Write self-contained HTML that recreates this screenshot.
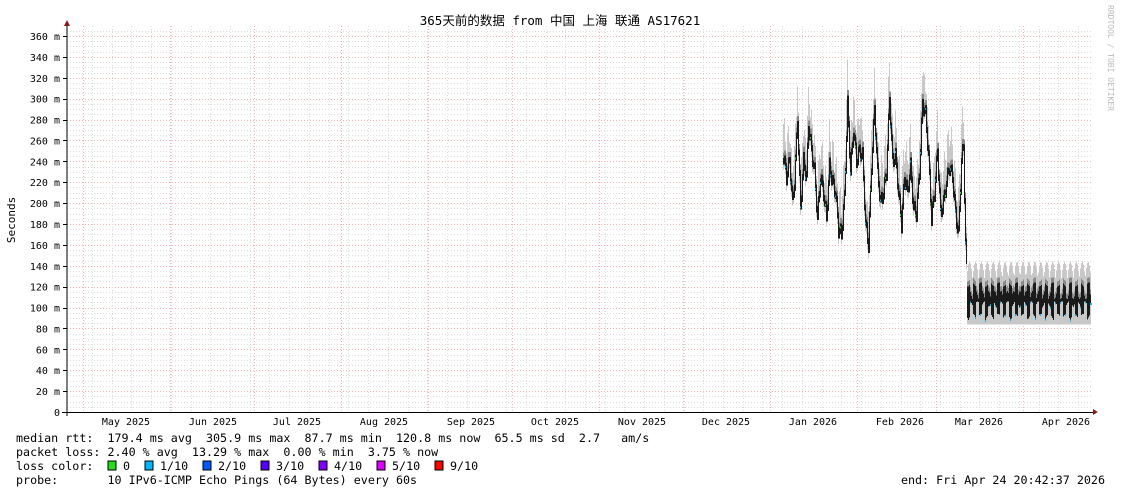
<!DOCTYPE html>
<html><head><meta charset="utf-8">
<style>
html,body{margin:0;padding:0;background:#fff;}
svg{display:block;}
text{font-family:"DejaVu Sans Mono","Liberation Mono","Noto Sans CJK SC",monospace;fill:#000;}
</style></head>
<body>
<svg id="g" width="1121" height="494" viewBox="0 0 1121 494" xmlns="http://www.w3.org/2000/svg" shape-rendering="crispEdges">
<g id="grid"></g>
<g id="data"></g>
<line x1="67" y1="24" x2="67" y2="416" stroke="#000" stroke-width="1"/>
<polygon points="64,26 70,26 67,20" fill="#8b1a1a"/>
<line x1="62" y1="412.5" x2="1095" y2="412.5" stroke="#000"/>
<polygon points="1093,409 1093,415 1098,412" fill="#8b1a1a"/>
<g id="labels" font-size="10"></g>
<text x="560" y="25" font-size="12.5" text-anchor="middle" font-family="'DejaVu Sans Mono','Noto Sans CJK SC',monospace">365天前的数据 from 中国 上海 联通 AS17621</text>
<text transform="translate(15,220) rotate(-90)" font-size="11" text-anchor="middle">Seconds</text>
<text transform="translate(1108,5) rotate(90)" font-size="8" style="fill:#bbb">RRDTOOL / TOBI OETIKER</text>
<g font-size="11.7">
<text x="16" y="442" xml:space="preserve">median rtt:  179.4 ms avg  305.9 ms max  87.7 ms min  120.8 ms now  65.5 ms sd  2.7   am/s</text>
<text x="16" y="456" xml:space="preserve">packet loss: 2.40 % avg  13.29 % max  0.00 % min  3.75 % now</text>
<text x="16" y="470" xml:space="preserve">loss color:  </text>
<text x="16" y="484" xml:space="preserve">probe:       10 IPv6-ICMP Echo Pings (64 Bytes) every 60s</text>
<text x="1105" y="484" text-anchor="end" xml:space="preserve">end: Fri Apr 24 20:42:37 2026</text>
</g>
<g id="lc" font-size="11.7"></g>
</svg>
<script>
var NS="http://www.w3.org/2000/svg";
function el(p,t,a,tx){var e=document.createElementNS(NS,t);for(var k in a)e.setAttribute(k,a[k]);if(tx!=null)e.textContent=tx;document.getElementById(p).appendChild(e);return e;}
function Y(v){return 412-v*1.0444;}
for(var v=5;v<=365;v+=5){var y=Math.round(Y(v))+0.5;var maj=(v%20==0);
 el("grid","line",{x1:67,x2:1093,y1:y,y2:y,stroke:maj?"#f4b0b0":"#ddd","stroke-dasharray":"1,2"});}
for(var x=92;x<1093;x+=19.72){var xx=Math.round(x)+0.5;el("grid","line",{x1:xx,x2:xx,y1:26,y2:412,stroke:"#ddd","stroke-dasharray":"1,2"});}
[83,170,254,341,428,512,599,683,770,857,936,1023].forEach(function(x){el("grid","line",{x1:x+0.5,x2:x+0.5,y1:26,y2:412,stroke:"#f4b0b0","stroke-dasharray":"1,2"});});
for(var v=0;v<=360;v+=20){var y=Y(v);el("labels","text",{x:60,y:y+4,"text-anchor":"end"},v==0?"0":v+" m");
 el("labels","line",{x1:63,x2:67,y1:Math.round(y)+0.5,y2:Math.round(y)+0.5,stroke:"#000"});}
[["May 2025",126],["Jun 2025",213],["Jul 2025",297],["Aug 2025",384],["Sep 2025",471],["Oct 2025",555],["Nov 2025",642],["Dec 2025",726],["Jan 2026",813],["Feb 2026",900],["Mar 2026",979],["Apr 2026",1066]].forEach(function(m){el("labels","text",{x:m[1],y:425,"text-anchor":"middle"},m[0]);});
var lc=[["#22dd22","0"],["#00b6ff","1/10"],["#005bff","2/10"],["#5500ff","3/10"],["#7f00ff","4/10"],["#d700ff","5/10"],["#ff0000","9/10"]];
var lx=108;lc.forEach(function(c){el("lc","rect",{x:lx,y:461,width:8,height:9,fill:c[0],stroke:"#000"});el("lc","text",{x:lx+15,y:470},c[1]);lx+=c[1].length*7+30;});
var kp=[[783,245],[786,225],[789,240],[792,200],[794,220],[797,280],[800,195],[803,240],[806,225],[808,275],[811,250],[814,230],[817,185],[820,225],[823,210],[826,185],[829,235],[832,220],[835,210],[838,175],[841,170],[844,205],[847,295],[850,230],[853,270],[856,240],[859,250],[862,245],[865,180],[868,160],[871,235],[874,290],[877,230],[880,200],[883,210],[886,230],[889,300],[892,240],[895,245],[898,210],[901,180],[904,225],[907,210],[910,235],[913,195],[916,190],[919,230],[922,295],[925,285],[928,245],[931,185],[934,210],[937,250],[940,190],[943,200],[946,220],[949,235],[952,225],[955,190],[958,170],[961,240],[963,255],[965,160],[967,120]];
function med(x){for(var i=0;i<kp.length-1;i++){if(x>=kp[i][0]&&x<=kp[i+1][0]){var t=(x-kp[i][0])/(kp[i+1][0]-kp[i][0]);return kp[i][1]+t*(kp[i+1][1]-kp[i][1]);}}return 120;}
var prev=240;
for(var x=783;x<=1090;x++){
 var m,lo,hi,gtop,gbot,dot;
 if(x<967){m=med(x);var s=Math.sin(x*1.7)*6;m+=s;lo=Math.min(prev,m)-3;hi=Math.max(prev,m)+3;gtop=m+15+Math.abs(Math.sin(x*0.9))*25;gbot=m-8;prev=m;dot=m;}
 else{var p=(x-967)%6;
  if(p<3){lo=88+Math.abs(Math.sin(x*0.37))*6;hi=122+Math.sin(x*0.7)*2;}
  else{lo=100+Math.abs(Math.sin(x*0.41))*6;hi=112+Math.sin(x)*4;}
  gtop=128+Math.abs(Math.sin(x*0.53))*16;gbot=84;dot=lo;}
 el("data","rect",{x:x,y:Y(gtop),width:1,height:Y(gbot)-Y(gtop),fill:"#c8c8c8"});
 el("data","rect",{x:x,y:Y(hi+5),width:1,height:Y(hi)-Y(hi+5),fill:"#8a8a8a"});
 el("data","rect",{x:x,y:Y(hi),width:1,height:Math.max(1,Y(lo)-Y(hi)),fill:"#1a1a1a"});
 if(x%5==0)el("data","rect",{x:x,y:Y(dot),width:2,height:2,fill:(x%15==0&&x<967)?"#22dd22":"#00b6ff"});
}
</script>
</body></html>
